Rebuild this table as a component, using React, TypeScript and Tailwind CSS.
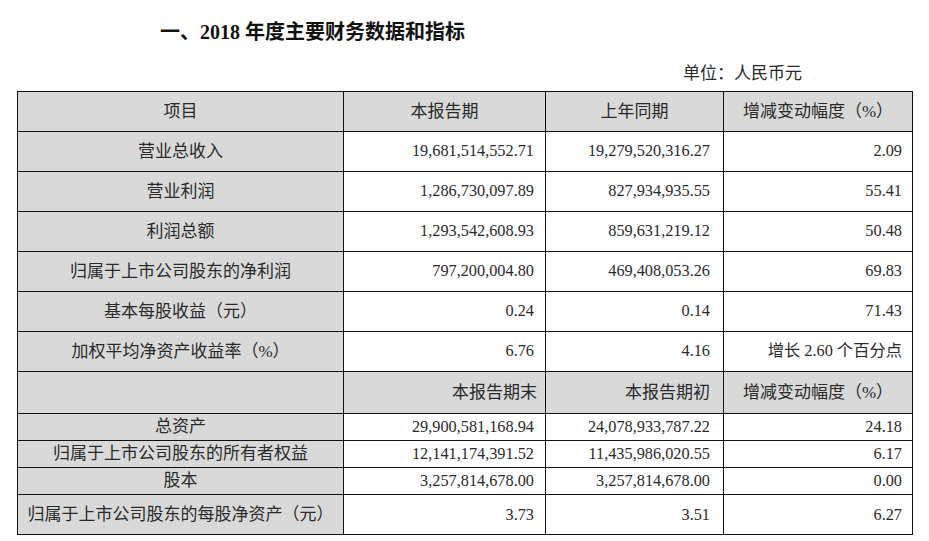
import React from 'react';

// 2018 annual report: key financial data table
const serif = { fontFamily: '"Liberation Serif", "Noto Sans CJK SC", serif' };

type Row = { label: string; cur: string; prev: string; change: string };

const topRows: Row[] = [
  { label: '营业总收入', cur: '19,681,514,552.71', prev: '19,279,520,316.27', change: '2.09' },
  { label: '营业利润', cur: '1,286,730,097.89', prev: '827,934,935.55', change: '55.41' },
  { label: '利润总额', cur: '1,293,542,608.93', prev: '859,631,219.12', change: '50.48' },
  { label: '归属于上市公司股东的净利润', cur: '797,200,004.80', prev: '469,408,053.26', change: '69.83' },
  { label: '基本每股收益（元）', cur: '0.24', prev: '0.14', change: '71.43' },
  { label: '加权平均净资产收益率（%）', cur: '6.76', prev: '4.16', change: '增长 2.60 个百分点' },
];

const bottomRows: (Row & { tall?: boolean })[] = [
  { label: '总资产', cur: '29,900,581,168.94', prev: '24,078,933,787.22', change: '24.18' },
  { label: '归属于上市公司股东的所有者权益', cur: '12,141,174,391.52', prev: '11,435,986,020.55', change: '6.17' },
  { label: '股本', cur: '3,257,814,678.00', prev: '3,257,814,678.00', change: '0.00' },
  { label: '归属于上市公司股东的每股净资产（元）', cur: '3.73', prev: '3.51', change: '6.27', tall: true },
];

const cell = 'border border-[#111] p-0';
const gray = 'bg-[#d9d9d9]';

export default function App() {
  return (
    <div className="w-[929px] h-[541px] bg-white text-[#2a2a2a]" style={serif}>
      <div className="pl-[160px] pt-[18px] text-[20px] font-bold leading-[28px] text-[#111]">
        一、2018 年度主要财务数据和指标
      </div>
      <div className="pt-[18px] pr-[127px] text-right text-[17px] leading-[20px]">单位：人民币元</div>
      <div className="pl-[17px] pt-[7px]">
        <table className="table-fixed border-collapse w-[895px]">
          <colgroup>
            <col className="w-[326px]" />
            <col className="w-[202px]" />
            <col className="w-[178px]" />
            <col className="w-[189px]" />
          </colgroup>
          <tbody>
            <tr className="h-[40px] text-[17px]">
              <td className={`${cell} ${gray} text-center`}>项目</td>
              <td className={`${cell} ${gray} text-center`}>本报告期</td>
              <td className={`${cell} ${gray} text-center`}>上年同期</td>
              <td className={`${cell} ${gray} text-center`}>增减变动幅度（%）</td>
            </tr>
            {topRows.map((r) => (
              <tr key={r.label} className="h-[40px]">
                <td className={`${cell} ${gray} text-center text-[17px]`}>{r.label}</td>
                <td className={`${cell} text-right pr-[11px] text-[16.3px]`}>{r.cur}</td>
                <td className={`${cell} text-right pr-[13px] text-[16.3px]`}>{r.prev}</td>
                <td className={`${cell} text-right pr-[10px] text-[16.3px]`}>{r.change}</td>
              </tr>
            ))}
            <tr className="h-[42px] text-[17px]">
              <td className={`${cell} ${gray}`}></td>
              <td className={`${cell} ${gray} text-right pr-[8px]`}>本报告期末</td>
              <td className={`${cell} ${gray} text-right pr-[13px]`}>本报告期初</td>
              <td className={`${cell} ${gray} text-center`}>增减变动幅度（%）</td>
            </tr>
            {bottomRows.map((r) => (
              <tr key={r.label} className={r.tall ? 'h-[40px]' : 'h-[27px]'}>
                <td className={`${cell} ${gray} text-center text-[17px] leading-[20px]`}>{r.label}</td>
                <td className={`${cell} text-right pr-[11px] text-[16.3px] leading-[20px]`}>{r.cur}</td>
                <td className={`${cell} text-right pr-[13px] text-[16.3px] leading-[20px]`}>{r.prev}</td>
                <td className={`${cell} text-right pr-[10px] text-[16.3px] leading-[20px]`}>{r.change}</td>
              </tr>
            ))}
          </tbody>
        </table>
      </div>
    </div>
  );
}
